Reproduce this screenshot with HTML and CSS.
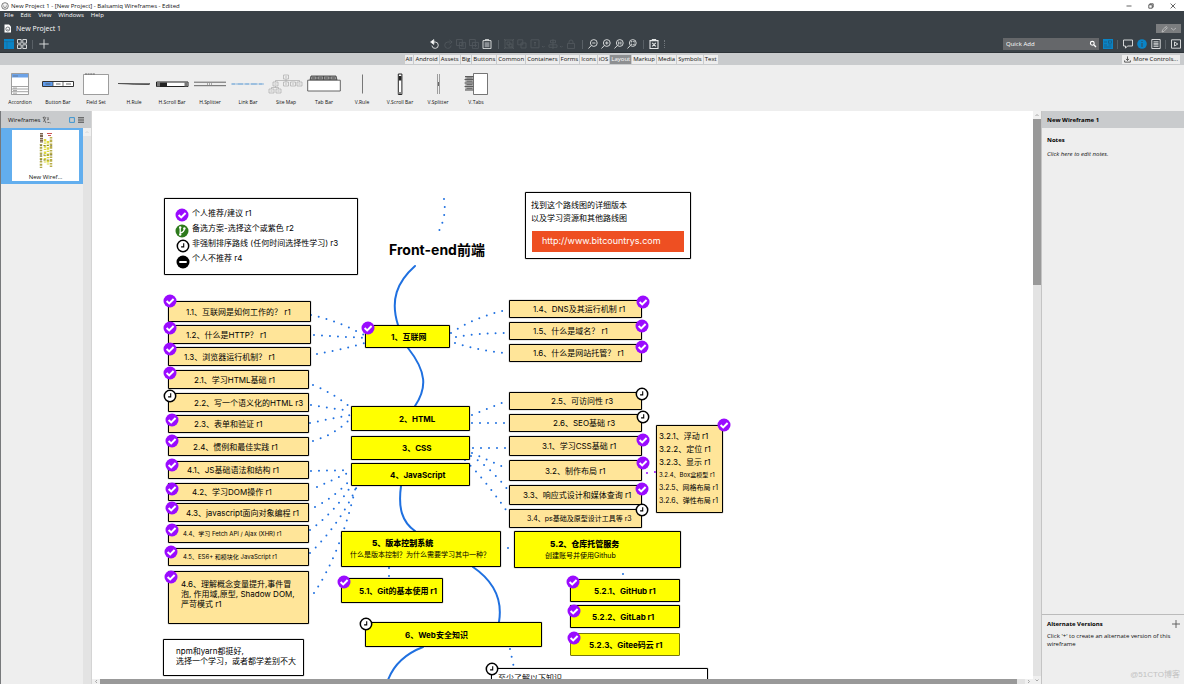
FILE: index.html
```html
<!DOCTYPE html>
<html lang="en">
<head>
<meta charset="utf-8">
<title>New Project 1 - Balsamiq Wireframes</title>
<link rel="stylesheet" href="styles.css">
</head>
<body>
<div class="app">
  <header class="titlebar">
    <svg class="logo" viewBox="0 0 8 8"><circle cx="4" cy="4" r="3.3" fill="none" stroke="#444" stroke-width=".7"/><path d="M2.4 3.2h.8M4.8 3.2h.8M2.2 4.6Q4 6.4 5.8 4.6" fill="none" stroke="#444" stroke-width=".7"/></svg>
    <span class="window-title">New Project 1 - [New Project] - Balsamiq Wireframes - Edited</span>
    <button class="win" aria-label="Minimize"><svg viewBox="0 0 6 6"><path d="M.5 3h5"/></svg></button>
    <button class="win" aria-label="Restore"><svg viewBox="0 0 6 6"><path d="M.8 1.8h3.4v3.4H.8zM1.8 1.6V.8h3.4v3.4h-.8"/></svg></button>
    <button class="win" aria-label="Close"><svg viewBox="0 0 6 6"><path d="M.6.6l4.8 4.8M5.4.6L.6 5.4"/></svg></button>
  </header>

  <div class="top">
    <nav class="menu">
      <button>File</button><button>Edit</button><button>View</button><button>Windows</button><button>Help</button>
    </nav>
    <div class="project">
      <svg class="doc" viewBox="0 0 8 9"><path d="M.5.5h4.5l2 2v6H.5z" fill="#fff"/><circle cx="3.8" cy="5" r="2" fill="none" stroke="#3a4147" stroke-width=".7"/><path d="M2.9 5.2q.9 1 1.8 0" fill="none" stroke="#3a4147" stroke-width=".5"/></svg>
      <span>New Project 1</span>
      <button class="edit" aria-label="Edit mode"><svg viewBox="0 0 20 8"><path d="M3 7l.6-2L7 1.4l1.4 1.3L5 6.3zM6.2 2.3l1.3 1.3M12 3l2.5 2L17 3" fill="none" stroke="#ccc" stroke-width=".7"/></svg></button>
    </div>
    <div class="tools">
      <div class="group">
        <button class="ic" aria-label="Editor"><svg viewBox="0 0 10 10"><path d="M0 0h10v10H0z" fill="#0a84c6" stroke="none"/><path d="M0 2.6h10M3 2.6V10" stroke="#24607f" stroke-width=".5"/></svg></button>
        <button class="ic" aria-label="Grid"><svg viewBox="0 0 10 10"><path d="M.5.5h3.7v3.7H.5zM5.8.5h3.7v3.7H5.8zM.5 5.8h3.7v3.7H.5zM5.8 5.8h3.7v3.7H5.8z"/></svg></button>
        <i class="sep"></i>
        <button class="ic" aria-label="Add wireframe"><svg viewBox="0 0 10 10"><path d="M5 .3v9.4M.3 5h9.4"/></svg></button>
      </div>
      <div class="group center">
        <button class="ic" aria-label="Undo"><svg viewBox="0 0 10 10"><path d="M2.6 3h2.6a3.2 3.2 0 1 1-3.3 3.6"/><path d="M.6 3L3.8.6v4.8z" fill="#fff"/></svg></button>
        <button class="ic off" aria-label="Redo"><svg viewBox="0 0 10 10"><path d="M7.4 3H4.8a3.2 3.2 0 1 0 3.3 3.6M6.4 1l2.8 2-2.8 2.2"/></svg></button>
        <button class="ic off" aria-label="Copy"><svg viewBox="0 0 10 10"><path d="M.5.5h5.8v6H.5zM3.4 3.4h6v6h-6zM5 5h3M5 7h3"/></svg></button>
        <button class="ic off" aria-label="Duplicate"><svg viewBox="0 0 10 10"><path d="M.5.5h5.8v6H.5zM3.4 3.4h6v6h-6zM5 6.4h3M6.5 5v3"/></svg></button>
        <button class="ic" aria-label="Paste"><svg viewBox="0 0 10 10"><path d="M1 1.6h8v8H1zM3.4 1.6V.4h3.2v1.2"/><path d="M2.6 3.2h4.8v5H2.6z" fill="#8b9095" stroke="none"/></svg></button>
        <i class="sep"></i>
        <button class="ic off" aria-label="Group"><svg viewBox="0 0 10 10"><path d="M1 1h8v8H1zM3 3h3v3H3zM5 5h3v3H5zM0 0l2 2M10 0L8 2M0 10l2-2M10 10L8 8"/></svg></button>
        <button class="ic off" aria-label="Ungroup"><svg viewBox="0 0 10 10"><path d="M.8.8h5v5h-5zM4 4h5v5H4z"/></svg></button>
        <button class="ic wide off" aria-label="Layering"><svg viewBox="0 0 15 10"><path d="M1 .8h8v8H1zM5 3v4M4 4l1-1 1 1M12 7l1.3 1.3L14.6 7"/></svg></button>
        <button class="ic wide off" aria-label="Align"><svg viewBox="0 0 15 10"><path d="M5 0v10M2.5 1.3h5v2.5h-5zM1 5.8h8v2.5H1zM12 7l1.3 1.3L14.6 7"/></svg></button>
        <button class="ic off" aria-label="Lock"><svg viewBox="0 0 10 10"><path d="M1.5 4.5h7v5h-7zM3 4.5V3a2 2 0 0 1 4 0v1.5"/></svg></button>
        <i class="sep"></i>
        <button class="ic" aria-label="Zoom out"><svg viewBox="0 0 10 10"><circle cx="5.8" cy="4" r="3.4"/><path d="M3.3 6.5L.5 9.5M4.2 4h3.2"/></svg></button>
        <button class="ic" aria-label="Zoom in"><svg viewBox="0 0 10 10"><circle cx="5.8" cy="4" r="3.4"/><path d="M3.3 6.5L.5 9.5M4.2 4h3.2M5.8 2.4v3.2"/></svg></button>
        <button class="ic" aria-label="Actual size"><svg viewBox="0 0 10 10"><circle cx="5.8" cy="4" r="3.4"/><path d="M3.3 6.5L.5 9.5M4.7 2.6v3M6.9 2.6v3M5.8 3v.4M5.8 4.6v.4"/></svg></button>
        <button class="ic" aria-label="Zoom to fit"><svg viewBox="0 0 10 10"><circle cx="5.8" cy="4" r="3.4"/><path d="M3.3 6.5L.5 9.5M4.3 3.5v-1h1M6.3 2.5h1v1M4.3 4.6v1h1M6.3 5.6h1v-1"/></svg></button>
        <i class="sep"></i>
        <button class="ic" aria-label="Markup"><svg viewBox="0 0 10 10"><path d="M1 1.6h8v8H1zM3.4 1.6V.4h3.2v1.2M3.2 3.8l3.6 3.6M6.8 3.8L3.2 7.4" stroke-width="1.1"/></svg></button>
        <i class="dots"></i>
      </div>
      <div class="group right">
        <div class="search"><input type="text" placeholder="Quick Add" aria-label="Quick Add"><svg viewBox="0 0 8 8"><circle cx="3.3" cy="3.3" r="1.9" fill="none" stroke="#fff" stroke-width="1.1"/><path d="M4.8 4.8L7 7" stroke="#fff" stroke-width="1.3"/></svg></div>
        <button class="ic" aria-label="UI Library"><svg viewBox="0 0 10 10"><path d="M0 0h10v10H0z" fill="#0a84c6" stroke="none"/><path d="M1 3h3M5.5 1.8h3v2.4h-3zM1 6h3M5.5 6h3M1 8h7.5" stroke="#1f4f6b" stroke-width=".6"/></svg></button>
        <i class="sep"></i>
        <button class="ic" aria-label="Comments"><svg viewBox="0 0 10 10"><path d="M.5 1h9v6H4.5L2.5 9.2V7h-2z"/></svg></button>
        <button class="ic" aria-label="Info"><svg viewBox="0 0 10 10"><circle cx="5" cy="5" r="4.8" fill="#0a84c6" stroke="none"/><path d="M5 2v1M5 4v4" stroke="#3a4147"/></svg></button>
        <button class="ic" aria-label="Properties"><svg viewBox="0 0 10 10"><path d="M.8.5h8.400v9H.8zM2.500 2.800h5M2.500 4.300h5M2.500 5.800h5M2.500 7.300h5"/></svg></button>
        <i class="sep"></i>
        <button class="ic" aria-label="Present"><svg viewBox="0 0 10 10"><path d="M.5.8h9v8.400h-9zM3.500 3v4l3.300-2z"/></svg></button>
      </div>
    </div>
  </div>

  <div class="cats">
    <div class="cat-list">
      <button>All</button><button>Android</button><button>Assets</button><button>Big</button><button>Buttons</button><button>Common</button><button>Containers</button><button>Forms</button><button>Icons</button><button>iOS</button><button class="on">Layout</button><button>Markup</button><button>Media</button><button>Symbols</button><button>Text</button>
    </div>
    <button class="more"><svg viewBox="0 0 8 8"><path d="M4 .5v4.5M2.2 3.3L4 5l1.8-1.7M.7 5v2h6.6V5" fill="none" stroke="#222" stroke-width=".8"/></svg>More Controls...</button>
  </div>

  <div class="palette">
    <button><svg viewBox="0 0 36 26"><path d="M9.5 2.5h17v21h-17z" fill="#fff" stroke="#777" stroke-width=".7"/><path d="M10 3h16v3.5H10z" fill="#6da3e8"/><path d="M10 15.5h16M10 18h16M10 20.7h16" stroke="#666" stroke-width=".6"/><path d="M11 5h5M11 17h4M11 19.5h4M11 22.2h4" stroke="#555" stroke-width=".5"/></svg>Accordion</button>
    <button><svg viewBox="0 0 36 26"><path d="M2.5 10.5h31v5h-31z" fill="#fff" stroke="#333"/><path d="M3 11h10v4H3z" fill="#5f9cec"/><path d="M13 11v4M23 11v4" stroke="#333" stroke-width=".7"/><path d="M5.5 13h5M16 13h4.5M26 13h5" stroke="#444" stroke-width=".8"/></svg>Button Bar</button>
    <button><svg viewBox="0 0 36 26"><path d="M5.5 3.5h25v20h-25z" fill="#fff" stroke="#777" stroke-width=".7"/><path d="M7 3h10" stroke="#666" stroke-width="1.2" stroke-dasharray="2 .6"/></svg>Field Set</button>
    <button><svg viewBox="0 0 36 26"><path d="M2 12.5q16 .2 32 .2l-1 .8q-14 .1-31-1z" fill="#222" stroke="#333" stroke-width=".6"/></svg>H.Rule</button>
    <button><svg viewBox="0 0 36 26"><path d="M2.5 11h31.5v4.5H2.5z" fill="#fff" stroke="#222"/><path d="M6 11.5h7v3.5H6z" fill="#222"/><path d="M3 11h3v4.5H3zM30.5 11h3v4.5h-3z" fill="#777"/></svg>H.Scroll Bar</button>
    <button><svg viewBox="0 0 36 26"><path d="M2 11.2h32M2 14.7h32" stroke="#555" stroke-width=".9"/><path d="M15 13h6" stroke="#666" stroke-dasharray="1 1"/></svg>H.Splitter</button>
    <button><svg viewBox="0 0 36 26"><path d="M1.5 13h33" stroke="#4a90d0" stroke-width="1.1" stroke-dasharray="4 .6 .6 .6 6 .6 .6 .6"/></svg>Link Bar</button>
    <button><svg viewBox="0 0 36 26"><path d="M15.5 4h5v4h-5zM5 11h5v4H5zM15.5 11h5v4h-5zM22.5 11h5v4h-5zM29 11h5v4h-5zM1 18h5v4H1zM8 18h5v4H8zM18 8v3M7.5 11V9.5h24V11M7.5 15v1.5M3.5 18v-1.5h7V18" fill="none" stroke="#aaa" stroke-width=".7"/><path d="M17 6h2M6.5 13h2M17 13h2M24 13h2M30.5 13h2M2.5 20h2M9.5 20h2" stroke="#888" stroke-width=".5"/></svg>Site Map</button>
    <button><svg viewBox="0 0 36 26"><path d="M5 5h25l1 4H4z" fill="#999" stroke="#333" stroke-width=".8"/><path d="M11 5v4M17.5 5v4M24 5v4M6 7h3M13 7h3M19 7h3M26 7h3" stroke="#333" stroke-width=".7"/><path d="M1.7 9.2h32.6V20H1.7z" fill="#fff" stroke="#555" stroke-width=".9"/></svg>Tab Bar</button>
    <button><svg viewBox="0 0 36 26"><path d="M18.5 3.5v19" stroke="#777"/></svg>V.Rule</button>
    <button><svg viewBox="0 0 36 26"><path d="M16.3 3h3.6v20.5h-3.6z" fill="#fff" stroke="#222"/><path d="M16.8 5h2.6v4.5h-2.6z" fill="#222"/><path d="M16.5 21h3v2h-3z" fill="#888"/></svg>V.Scroll Bar</button>
    <button><svg viewBox="0 0 36 26"><path d="M17.500 3v20M19.500 3v20" stroke="#888" stroke-width=".8"/><path d="M18.500 11v4" stroke="#444" stroke-width=".8"/></svg>V.Splitter</button>
    <button><svg viewBox="0 0 36 26"><path d="M7 5h9v14.500H7z" fill="#bbb"/><path d="M7 5.500h9M6.500 8.500h9M6.500 12h9M6.500 15.500h9M7 19h9M8.500 7h6M8.500 10.200h6M8.500 13.700h6M8.500 17.300h6" stroke="#444" stroke-width=".8"/><path d="M15.500 2.500h14v21h-14z" fill="#fff" stroke="#555" stroke-width=".8"/></svg>V.Tabs</button>
  </div>

  <main class="main">
    <aside class="left">
      <div class="panel-head"><span>Wireframes</span>
        <svg class="sort" viewBox="0 0 9 8"><path d="M1 1l3 6M4 1L1.500 6M1 1.500l2-.5M5 2h2M5 4l2-1M5.500 6.500h2M8 7h.5" fill="none" stroke="#555" stroke-width=".8"/></svg>
        <button class="mini" aria-label="Thumbnails"><svg viewBox="0 0 6 6"><path d="M.6.6h4.8v4.8H.6z" fill="none" stroke="#2d8fd0" stroke-width=".9"/></svg></button>
        <button class="mini" aria-label="List"><svg viewBox="0 0 6 6"><path d="M0 .8h6M0 3h6M0 5.200h6" stroke="#333" stroke-width=".9"/></svg></button>
      </div>
      <div class="left-body">
        <div class="thumbs">
          <button class="thumb">
            <svg viewBox="0 0 16 38"><g fill="none"><path d="M3.500 1v10" stroke="#7d6650" stroke-width="3" stroke-dasharray="1.500 .5 2 .7"/><path d="M3 12v24" stroke="#b0a84a" stroke-width="2.500" stroke-dasharray="1.500 1.200 2 1"/><path d="M7 7v25M10 9v24" stroke="#dcd83e" stroke-width="2.500" stroke-dasharray="2.500 1 1.200 1.600"/><path d="M13 5v30" stroke="#b9ae4c" stroke-width="2.500" stroke-dasharray="1.600 1 2.600 1.300"/><path d="M9 1.500h5M10 3.500h3" stroke="#c55" stroke-width="1.200"/><path d="M2 13.500h13M2 23h13M2 28h10" stroke="#5f5a30" stroke-width=".7" stroke-dasharray="2 1.400"/></g></svg>
            <span>New Wiref...</span>
          </button>
        </div>
        <div class="vbar quiet"><svg viewBox="0 0 8 8"><path d="M2.500 5L4 3.500 5.500 5"/></svg></div>
      </div>
    </aside>

    <section class="work">
      <div class="canvas">
        <div class="board">
          <svg class="wires" viewBox="0 0 1184 684">
            <g class="line"><path d="M415 266C397 282 390 300 398 325M408 348C427 372 427 388 415 406M401 486C398 508 402 522 415 531M473 567C492 580 503 598 499 622M423 647C405 654 394 664 388 680"/></g>
            <g class="dot">
              <path d="M444 199Q447 216 438 233"/>
              <path d="M311 315Q336 320 364 335M314 335L365 338M317 354Q340 350 365 343"/>
              <path d="M451 333Q475 317 506 310M456 337Q480 333 508 333M455 343Q480 351 506 353"/>
              <path d="M313 385Q335 394 351 408M311 405L350 411M310 423L350 415M313 441Q336 434 350 419"/>
              <path d="M472 415L504 402M472 423L508 423"/>
              <path d="M473 448L508 448M472 453L508 469M471 456Q490 467 508 490M465 460Q487 482 508 513"/>
              <path d="M311 471L350 470M317 487L350 472M315 507Q336 496 350 480M310 530Q335 512 353 483M310 553Q340 525 359 482M314 593Q340 555 356 486"/>
              <path d="M389 568V578M508 548h.1M623 574h.1M510 649L514 668"/>
              <path d="M647 473L656 472" class="violet"/>
            </g>
          </svg>

          <div class="card legend">
            <span>个人推荐/建议 r1</span><span>备选方案-选择这个或紫色 r2</span><span>非强制排序路线 (任何时间选择性学习) r3</span><span>个人不推荐 r4</span>
          </div>
          <h1 class="heading">Front-end前端</h1>
          <div class="card source"><p>找到这个路线图的详细版本<br>以及学习资源和其他路线图</p><a href="#">http://www.bitcountrys.com</a></div>

          <div class="node colA n11">1.1、互联网是如何工作的？ r1</div>
          <div class="node colA n12">1.2、什么是HTTP？ r1</div>
          <div class="node colA n13">1.3、浏览器运行机制？ r1</div>
          <div class="node colB n21">2.1、学习HTML基础 r1</div>
          <div class="node colB n22">2.2、写一个语义化的HTML r3</div>
          <div class="node colB n23">2.3、表单和验证 r1</div>
          <div class="node colB n24">2.4、惯例和最佳实践 r1</div>
          <div class="node colB n41">4.1、JS基础语法和结构 r1</div>
          <div class="node colB n42">4.2、学习DOM操作 r1</div>
          <div class="node colB n43">4.3、javascript面向对象编程 r1</div>
          <div class="node colB tiny n44">4.4、学习 Fetch API / Ajax (XHR) r1</div>
          <div class="node colB tiny n45">4.5、ES6+ 和模块化 JavaScript r1</div>
          <div class="node colB n46">4.6、理解概念变量提升,事件冒<br>泡, 作用域,原型, Shadow DOM,<br>严苛模式 r1</div>
          <div class="card npm">npm和yarn都挺好,<br>选择一个学习，或者都学差别不大</div>

          <div class="node main-node m1">1、互联网</div>
          <div class="node main-node colM m2">2、HTML</div>
          <div class="node main-node colM m3">3、CSS</div>
          <div class="node main-node colM m4">4、JavaScript</div>
          <div class="node main-node stack m5"><b>5、版本控制系统</b><span>什么是版本控制？为什么需要学习其中一种？</span></div>
          <div class="node main-node m51">5.1、Git的基本使用 r1</div>
          <div class="node main-node m6">6、Web安全知识</div>
          <div class="node main-node stack m52"><b>5.2、仓库托管服务</b><span>创建账号并使用Github</span></div>
          <div class="node main-node colG g1">5.2.1、GitHub r1</div>
          <div class="node main-node colG g2">5.2.2、GitLab r1</div>
          <div class="node main-node colG g3">5.2.3、Gitee码云 r1</div>

          <div class="node colC n14">1.4、DNS及其运行机制 r1</div>
          <div class="node colC n15">1.5、什么是域名？ r1</div>
          <div class="node colC n16">1.6、什么是网站托管？ r1</div>
          <div class="node colC n25">2.5、可访问性 r3</div>
          <div class="node colC n26">2.6、SEO基础 r3</div>
          <div class="node colC n31">3.1、学习CSS基础 r1</div>
          <div class="node colC n32">3.2、制作布局 r1</div>
          <div class="node colC n33">3.3、响应式设计和媒体查询 r1</div>
          <div class="node colC small n34">3.4、ps基础及原型设计工具等 r3</div>
          <div class="node css-list"><span>3.2.1、浮动 r1</span><span>3.2.2、定位 r1</span><span>3.2.3、显示 r1</span><span class="tiny">3.2.4、Box盒模型 r1</span><span class="small">3.2.5、网格布局 r1</span><span class="small">3.2.6、弹性布局 r1</span></div>
          <div class="card learn">至少了解以下知识</div>

          <svg class="wires" viewBox="0 0 1184 684">
            <defs>
              <g id="ok"><circle r="6.500" fill="#9a0bff"/><path d="M-3.400 0L-.8 2.400L3.600-2" fill="none" stroke="#fff" stroke-width="2"/></g>
              <g id="clock"><circle r="5.700" fill="#fff" stroke="#000" stroke-width="1.500"/><path d="M.7-2.800V.9H-1.900" fill="none" stroke="#000" stroke-width="1.100"/></g>
              <g id="alt"><circle r="6.500" fill="#2d7a1c"/><path d="M-1.800-4V4M-1.800 2Q2.400 1 2.400-2.500" fill="none" stroke="#fff" stroke-width="1.300"/><circle cx="-1.800" cy="-3.600" r="1.200" fill="#fff"/><circle cx="-1.800" cy="3.600" r="1.200" fill="#fff"/><circle cx="2.400" cy="-2.600" r="1.200" fill="#fff"/></g>
              <g id="no"><circle r="6.500"/><path d="M-3.700 0H3.700" stroke="#fff" stroke-width="2"/></g>
            </defs>
            <use href="#ok" x="182" y="215"/><use href="#alt" x="182" y="231"/><use href="#clock" x="183" y="246"/><use href="#no" x="183" y="262"/>
            <use href="#ok" x="170" y="301"/><use href="#ok" x="170" y="328"/><use href="#ok" x="170" y="349"/><use href="#ok" x="170" y="373"/><use href="#clock" x="170" y="396"/>
            <use href="#ok" x="172" y="420"/><use href="#ok" x="172" y="441"/><use href="#ok" x="172" y="465"/><use href="#ok" x="172" y="489"/><use href="#ok" x="172" y="508"/><use href="#ok" x="172" y="530"/><use href="#ok" x="171" y="552"/><use href="#ok" x="171" y="577"/>
            <use href="#ok" x="368" y="328"/><use href="#ok" x="344" y="582"/><use href="#clock" x="366" y="624"/><use href="#clock" x="492" y="669"/>
            <use href="#ok" x="573" y="582"/><use href="#ok" x="574" y="611"/><use href="#ok" x="574" y="638"/>
            <use href="#ok" x="643" y="302"/><use href="#ok" x="642" y="326"/><use href="#ok" x="642" y="347"/><use href="#clock" x="642" y="394"/><use href="#clock" x="643" y="417"/>
            <use href="#ok" x="643" y="440"/><use href="#ok" x="643" y="463"/><use href="#ok" x="642" y="489"/><use href="#clock" x="642" y="510"/><use href="#ok" x="724" y="425"/>
          </svg>
        </div>
      </div>
      <div class="hbar"><svg viewBox="0 0 8 5"><path d="M5 1L3.500 2.500 5 4"/></svg><i></i><svg class="end" viewBox="0 0 8 5"><path d="M3 1l1.500 1.500L3 4"/></svg></div>
    </section>

    <div class="vbar"><svg viewBox="0 0 8 8"><path d="M2.500 5L4 3.500 5.500 5"/></svg><i></i><svg class="down" viewBox="0 0 8 8"><path d="M2.500 3.500L4 5l1.500-1.500"/></svg></div>

    <aside class="right-panel">
      <h2 class="panel-head strong">New Wireframe 1</h2>
      <div class="notes"><h3>Notes</h3><p><em>Click here to edit notes.</em></p></div>
      <div class="alts">
        <div class="alts-head"><h3>Alternate Versions</h3><button aria-label="Add alternate version"><svg viewBox="0 0 8 8"><path d="M4 0v8M0 4h8" stroke="#555" stroke-width=".9"/></svg></button></div>
        <p>Click '+' to create an alternate version of this wireframe</p>
        <p class="mark">@51CTO博客</p>
      </div>
    </aside>
  </main>
</div>
</body>
</html>
```

FILE: styles.css
```css
* { box-sizing: border-box; margin: 0; padding: 0; }
body { font: 6px/8px "Open Sans", "Noto Sans CJK SC", sans-serif; color: #111; }
button { font: inherit; color: inherit; background: none; border: 0; }
svg { display: block; }
.app { display: flex; flex-direction: column; height: 100vh; background: #eee; }

.titlebar { display: flex; align-items: center; height: 11px; padding: 0 8px 0 1px; background: #fff; }
.logo { width: 8px; height: 8px; margin-right: 2px; }
.window-title { flex: 1; color: #111; }
.win { width: 6px; margin-left: 16px; }
.win svg { width: 6px; height: 6px; fill: none; stroke: #222; stroke-width: 0.7px; }

.top { background: #3a4147; color: #fff; height: 42px; border-bottom: 1px solid #2d3338; }
.menu { display: flex; align-items: center; gap: 7px; height: 8px; padding-left: 4px; }
.project { display: flex; align-items: center; height: 19px; padding: 0 3px 0 4px; font-size: 7px; }
.doc { width: 8px; height: 9px; margin-right: 4px; }
.edit { width: 25px; height: 9px; margin-left: auto; background: #7b7d7f; }
.edit svg { width: 20px; height: 8px; margin-left: 3px; }
.tools { display: flex; align-items: center; height: 12px; padding: 0 3px; }
.group { display: flex; align-items: center; gap: 2px; }
.group.center { flex: 1; justify-content: center; padding-left: 42px; }
.ic { width: 11px; height: 11px; flex: none; }
.ic svg { width: 10px; height: 10px; margin: 0 auto; fill: none; stroke: #e4e6e7; stroke-width: 0.9px; }
.ic.wide { width: 16px; }
.ic.wide svg { width: 15px; }
.ic.off svg { stroke: #50575c; }
.sep { width: 1px; height: 9px; margin: 0 3px; background: #596066; }
.dots { width: 1px; height: 8px; margin-left: 2px; border-left: 1px dotted #70767b; }
.group.right { gap: 3px; }
.group.right .sep { margin: 0 1px; }
.search { display: flex; align-items: center; width: 96px; height: 12px; padding: 0 2px 0 3px; background: #65676a; }
.search input { flex: 1; min-width: 0; font: inherit; color: #fff; background: none; border: 0; outline: 0; }
.search input::placeholder { color: #fff; }
.search svg { width: 8px; height: 8px; }

.cats { display: flex; align-items: center; height: 12px; padding-right: 4px; background: #c9cbcd; }
.cat-list { flex: 1; display: flex; justify-content: center; gap: 1px; }
.cat-list button { padding: 0 1px; height: 9px; background: #ededed; }
.cat-list button.on { background: #8d8f91; color: #fff; }
.more { display: flex; align-items: center; gap: 2px; height: 9px; padding: 0 2px; background: #ededed; white-space: nowrap; }
.more svg { width: 7px; height: 7px; }

.palette { display: flex; height: 46px; padding: 5px 0 0 1px; font-size: 5px; }
.palette button { width: 38px; height: 36px; }
.palette svg { width: 36px; height: 26px; margin: 0 auto 1px; }

.main { flex: 1; display: flex; min-height: 0; }
.panel-head { display: flex; align-items: center; height: 17px; background: #c9cbcd; }
.left { display: flex; flex-direction: column; width: 92px; border-left: 1px solid #77797b; border-right: 1px solid #d4d4d4; }
.left .panel-head { padding: 0 7px; }
.sort { width: 9px; height: 8px; margin: 0 auto 0 2px; }
.mini { margin-left: 3px; }
.mini svg { width: 6px; height: 6px; }
.left-body { flex: 1; display: flex; }
.thumbs { flex: 1; }
.thumb { display: flex; flex-direction: column; align-items: center; justify-content: space-between; width: 100%; height: 56px; padding: 2px 0 0; border: solid #62aeee; border-width: 2px 4px 3px 11px; background: #fff; }
.thumb svg { width: 16px; height: 38px; }

.vbar { display: flex; flex-direction: column; width: 8px; background: #e3e3e3; }
.vbar svg, .hbar svg { width: 8px; height: 8px; background: #f0f0f0; fill: none; stroke: #888; stroke-width: 0.7px; }
.vbar i { height: 29%; background: #999; }
.vbar .down { margin-top: auto; }
.vbar.quiet svg { stroke: #ccc; }
.hbar { display: flex; height: 5px; background: #e3e3e3; }
.hbar svg { height: 5px; }
.hbar i { flex: 1; margin-right: 8px; background: #999; }

.work { flex: 1; display: flex; flex-direction: column; min-width: 0; }
.canvas { flex: 1; position: relative; overflow: hidden; background: #fff; }

/* The board keeps document coordinates and is scrolled under the canvas. */
.board { position: absolute; left: -92px; top: -111px; width: 1184px; height: 684px; font: 8px/10px Inter, "Noto Sans CJK SC", sans-serif; color: #000; white-space: nowrap; }
.wires { position: absolute; inset: 0; width: 1184px; height: 684px; }
.line, .dot { fill: none; stroke: #1f70e0; stroke-width: 2px; stroke-linecap: round; }
.dot { stroke-dasharray: 0 8; }
.violet { stroke: #9a0bff; }

.card, .node { position: absolute; border: 1px solid #000; box-shadow: 0 0 1px #000; border-radius: 1px; }
.card { background: #fff; }
.node { display: flex; align-items: center; background: #ffe599; }
.small { font-size: 7px; }
.tiny { font-size: 6px; }
.main-node { background: #ff0; font-weight: 700; }
.stack { flex-direction: column; align-items: flex-start; justify-content: center; gap: 2px; }
.stack span { font-size: 7px; font-weight: 400; }

.legend { left: 164px; top: 198px; width: 194px; height: 77px; padding: 9px 0 0 27px; display: flex; flex-direction: column; gap: 5px; }
.heading { position: absolute; left: 389px; top: 240px; font-size: 14px; line-height: 19px; font-weight: 700; }
.source { left: 525px; top: 192px; width: 166px; height: 67px; padding: 6px 6px 6px 5px; line-height: 13px; }
.source a { display: block; height: 21px; margin: 6px 0 0 1px; padding-left: 10px; background: #ee4f22; color: #fff; font-size: 9px; line-height: 20px; text-decoration: none; }
.npm { left: 163px; top: 639px; width: 141px; height: 37px; padding: 6px 0 0 12px; }
.learn { left: 491px; top: 668px; width: 217px; height: 40px; padding: 4px 6px; }

.colA { left: 168px; width: 143px; }
.colB { left: 168px; width: 141px; }
.colC { left: 509px; width: 133px; }
.colM { left: 351px; width: 119px; }
.colG { left: 570px; width: 110px; height: 23px; }
.n11 { top: 301px; height: 21px; padding-left: 17px; }
.n12 { top: 325px; height: 19px; padding-left: 17px; }
.n13 { top: 347px; height: 19px; padding-left: 15px; }
.n21 { top: 370px; height: 19px; padding-left: 25px; }
.n22 { top: 393px; height: 19px; padding-left: 25px; }
.n23 { top: 415px; height: 18px; padding-left: 25px; }
.n24 { top: 437px; height: 19px; padding-left: 24px; }
.n41 { top: 461px; height: 18px; padding-left: 18px; }
.n42 { top: 483px; height: 18px; padding-left: 23px; }
.n43 { top: 503px; height: 19px; padding-left: 17px; }
.n44 { top: 525px; height: 18px; padding-left: 14px; }
.n45 { top: 548px; height: 18px; padding-left: 14px; }
.n46 { top: 571px; height: 53px; padding: 0 0 7px 12px; }
.n14 { top: 300px; height: 18px; padding-left: 23px; }
.n15 { top: 322px; height: 18px; padding-left: 23px; }
.n16 { top: 344px; height: 18px; padding-left: 23px; }
.n25 { top: 392px; height: 18px; padding-left: 41px; }
.n26 { top: 414px; height: 18px; padding-left: 43px; }
.n31 { top: 436px; height: 20px; padding-left: 32px; }
.n32 { top: 460px; height: 21px; padding-left: 35px; }
.n33 { top: 485px; height: 20px; padding-left: 13px; }
.n34 { top: 509px; height: 19px; padding-left: 17px; }
.css-list { left: 656px; top: 425px; width: 67px; height: 88px; padding: 5px 0 6px 2px; flex-direction: column; align-items: flex-start; justify-content: space-between; }
.m1 { left: 365px; top: 325px; width: 85px; height: 23px; padding-left: 25px; }
.m2 { top: 406px; height: 25px; padding-left: 47px; }
.m3 { top: 436px; height: 24px; padding-left: 50px; }
.m4 { top: 463px; height: 23px; padding-left: 38px; }
.m5 { left: 341px; top: 531px; width: 160px; height: 36px; padding-left: 8px; }
.m5 b { padding-left: 22px; }
.m51 { left: 341px; top: 578px; width: 102px; height: 25px; padding-left: 17px; }
.m6 { left: 365px; top: 622px; width: 177px; height: 25px; padding-left: 39px; }
.m52 { left: 514px; top: 531px; width: 167px; height: 37px; padding-left: 30px; }
.m52 b { padding-left: 5px; }
.g1 { top: 579px; padding-left: 23px; }
.g2 { top: 605px; padding-left: 21px; }
.g3 { top: 633px; padding-left: 18px; border-color: #77770a; box-shadow: none; }

.right-panel { display: flex; flex-direction: column; width: 143px; border-left: 1px solid #c4c4c4; }
.right-panel .panel-head { padding-left: 5px; }
.right-panel h2, .right-panel h3 { font-size: 6px; line-height: 8px; font-weight: 700; color: #000; }
.notes { flex: 1; padding: 8px 5px; }
.notes p { margin-top: 6px; }
.alts { position: relative; height: 70px; padding: 4px 4px 0 5px; border-top: 1px solid #bbb; }
.alts-head { display: flex; justify-content: space-between; align-items: center; height: 10px; margin-bottom: 3px; }
.alts-head svg { width: 8px; height: 8px; }
.mark { position: absolute; right: 4px; bottom: 4px; font: 8px/10px "Liberation Sans", "Noto Sans CJK SC", sans-serif; color: #c2c2c2; }
```
